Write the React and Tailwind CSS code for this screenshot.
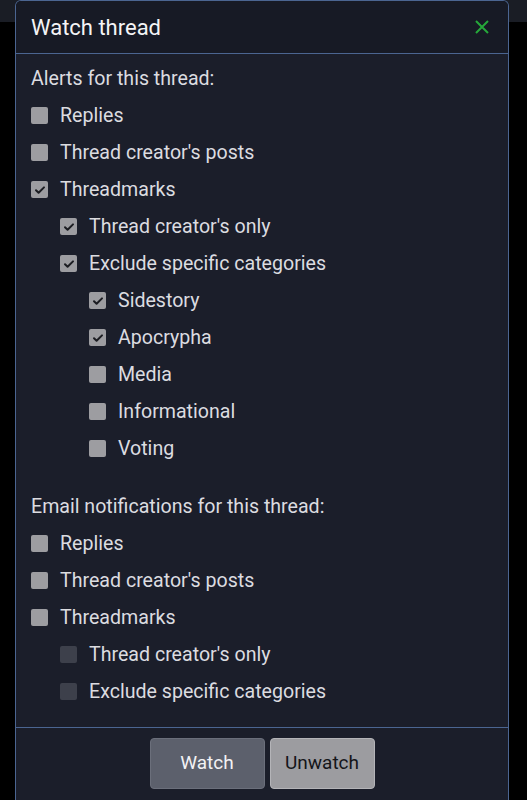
import React from "react";

const alerts = [
  { label: "Replies", level: 0, checked: false },
  { label: "Thread creator's posts", level: 0, checked: false },
  { label: "Threadmarks", level: 0, checked: true },
  { label: "Thread creator's only", level: 1, checked: true },
  { label: "Exclude specific categories", level: 1, checked: true },
  { label: "Sidestory", level: 2, checked: true },
  { label: "Apocrypha", level: 2, checked: true },
  { label: "Media", level: 2, checked: false },
  { label: "Informational", level: 2, checked: false },
  { label: "Voting", level: 2, checked: false },
];

const emails = [
  { label: "Replies", level: 0, checked: false },
  { label: "Thread creator's posts", level: 0, checked: false },
  { label: "Threadmarks", level: 0, checked: false },
  { label: "Thread creator's only", level: 1, checked: false, disabled: true },
  { label: "Exclude specific categories", level: 1, checked: false, disabled: true },
];

const indent = ["pl-0", "pl-[29px]", "pl-[58px]"];

function Box({ checked, disabled }) {
  return (
    <span
      className={`flex h-[17px] w-[17px] shrink-0 items-center justify-center rounded-[2px] ${
        disabled ? "bg-[#3d404b]" : "bg-[#9d9da1]"
      }`}
    >
      {checked && (
        <svg width="12" height="12" viewBox="0 0 12 12" fill="none">
          <path
            d="M2 6.2l2.6 2.6L10 3.4"
            stroke="#1c1d22"
            strokeWidth="2"
            strokeLinecap="round"
            strokeLinejoin="round"
          />
        </svg>
      )}
    </span>
  );
}

function Row({ item }) {
  return (
    <div className={`flex h-[37px] items-center gap-3 ${indent[item.level]}`}>
      <Box checked={item.checked} disabled={item.disabled} />
      <span className="text-[19.6px] text-[#dcdce0]">{item.label}</span>
    </div>
  );
}

export default function App() {
  return (
    <div
      className="min-h-[800px] bg-[linear-gradient(#1a1d25_22px,#000_22px)] px-[15px]"
      style={{ fontFamily: "Roboto, 'Noto Sans', sans-serif" }}
    >
      <div className="w-[494px] overflow-hidden rounded-t-[6px] border border-b-0 border-[#4b6591] bg-[#1b1e2a]">
        {/* header */}
        <div className="flex h-[53px] items-center justify-between border-b border-[#4b6591] bg-[#171a25] pl-[15px] pr-[18px]">
          <h2 className="text-[22px] text-[#f4f4f6]">Watch thread</h2>
          <svg width="16" height="16" viewBox="0 0 16 16" fill="none">
            <path d="M2 2l12 12M14 2L2 14" stroke="#26a83a" strokeWidth="2" />
          </svg>
        </div>

        {/* body */}
        <div className="px-[15px] pb-[17px] pt-[6px]">
          <div className="flex h-[37px] items-center text-[19.6px] text-[#dcdce0]">
            Alerts for this thread:
          </div>
          {alerts.map((a, i) => (
            <Row key={i} item={a} />
          ))}
          <div className="mt-[21px] flex h-[37px] items-center text-[19.6px] text-[#dcdce0]">
            Email notifications for this thread:
          </div>
          {emails.map((a, i) => (
            <Row key={i} item={a} />
          ))}
        </div>

        {/* footer */}
        <div className="flex justify-center gap-[5px] border-t border-[#4b6591] pb-[20px] pt-[10px]">
          <button className="h-[51px] w-[115px] rounded-[4px] border border-[#6b6f7b] bg-[#5c606c] text-[19px] text-[#f2f2f4]">
            Watch
          </button>
          <button className="h-[51px] w-[105px] rounded-[4px] border border-[#b4b4b8] bg-[#9c9ca0] text-[19px] text-[#141519]">
            Unwatch
          </button>
        </div>
      </div>
    </div>
  );
}
